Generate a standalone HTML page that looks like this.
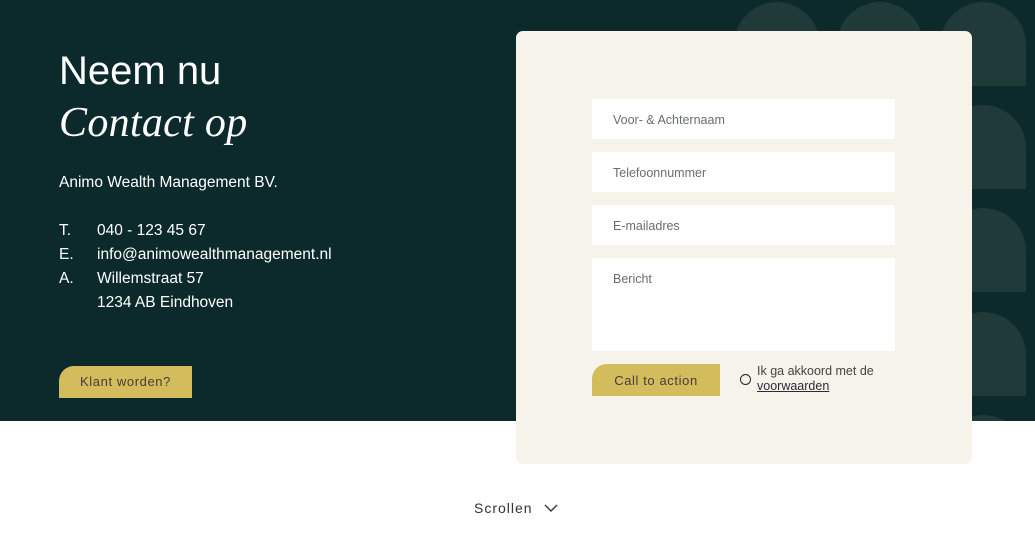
<!DOCTYPE html>
<html><head><style>
*{margin:0;padding:0;box-sizing:border-box}
body{width:1035px;height:547px;background:#fff;position:relative;overflow:hidden;font-family:"Liberation Sans",sans-serif}
.dark{position:absolute;left:0;top:0;width:1035px;height:421px;background:#0c2a2b;overflow:hidden}
.arch{position:absolute;width:86px;height:84px;background:#1f3a39;border-radius:43px 43px 0 0}
.card{position:absolute;left:516px;top:31px;width:456px;height:433px;background:#f5f3ea;border-radius:7px}
.in{position:absolute;left:76px;width:303px;height:40px;background:#fff;font-size:12.5px;color:#6a6e6c;padding:14px 0 0 21px}
.t{position:absolute;color:#fff}
.btn{position:absolute;background:#d3bc5b;color:#4a3b3b;font-size:13px;letter-spacing:.6px;border-radius:15px 0 0 0;text-align:center}
</style></head><body>
<div class="dark">
<div class="arch" style="left:734px;top:2px"></div>
<div class="arch" style="left:837px;top:2px"></div>
<div class="arch" style="left:940px;top:2px"></div>
<div class="arch" style="left:940px;top:105px"></div>
<div class="arch" style="left:940px;top:208px"></div>
<div class="arch" style="left:940px;top:312px"></div>
<div class="arch" style="left:940px;top:415px"></div>
<div class="t" style="left:59px;top:49px;font-size:40px;font-weight:300">Neem nu</div>
<div class="t" style="left:59px;top:99px;font-size:42px;font-style:italic;font-family:'Liberation Serif',serif;letter-spacing:.3px">Contact op</div>
<div class="t" style="left:59px;top:174px;font-size:15.5px">Animo Wealth Management BV.</div>
<div class="t" style="left:59px;top:219px;font-size:15.5px;line-height:24px">T.<br>E.<br>A.</div>
<div class="t" style="left:97px;top:219px;font-size:15.5px;line-height:24px">040 - 123 45 67<br>info@animowealthmanagement.nl<br>Willemstraat 57<br>1234 AB Eindhoven</div>
<div class="btn" style="left:59px;top:366px;width:133px;height:32px;line-height:32px">Klant worden?</div>
</div>
<div class="card">
<div class="in" style="top:68px">Voor- &amp; Achternaam</div>
<div class="in" style="top:121px">Telefoonnummer</div>
<div class="in" style="top:174px">E-mailadres</div>
<div class="in" style="top:227px;height:93px">Bericht</div>
<div class="btn" style="left:76px;top:333px;width:128px;height:32px;line-height:33px">Call to action</div>
<div style="position:absolute;left:224px;top:343px;width:11px;height:11px;border:1.5px solid #222;border-radius:50%"></div>
<div style="position:absolute;left:241px;top:333px;font-size:12.5px;color:#444;line-height:15px">Ik ga akkoord met de<br><span style="text-decoration:underline;color:#2a2a3a">voorwaarden</span></div>
</div>
<div style="position:absolute;left:474px;top:500px;font-size:14px;color:#333;letter-spacing:1px">Scrollen</div>
<svg style="position:absolute;left:544px;top:503px" width="14" height="10" viewBox="0 0 14 10"><path d="M1 2l6 6 6-6" stroke="#333" stroke-width="1.4" fill="none"/></svg>
</body></html>
